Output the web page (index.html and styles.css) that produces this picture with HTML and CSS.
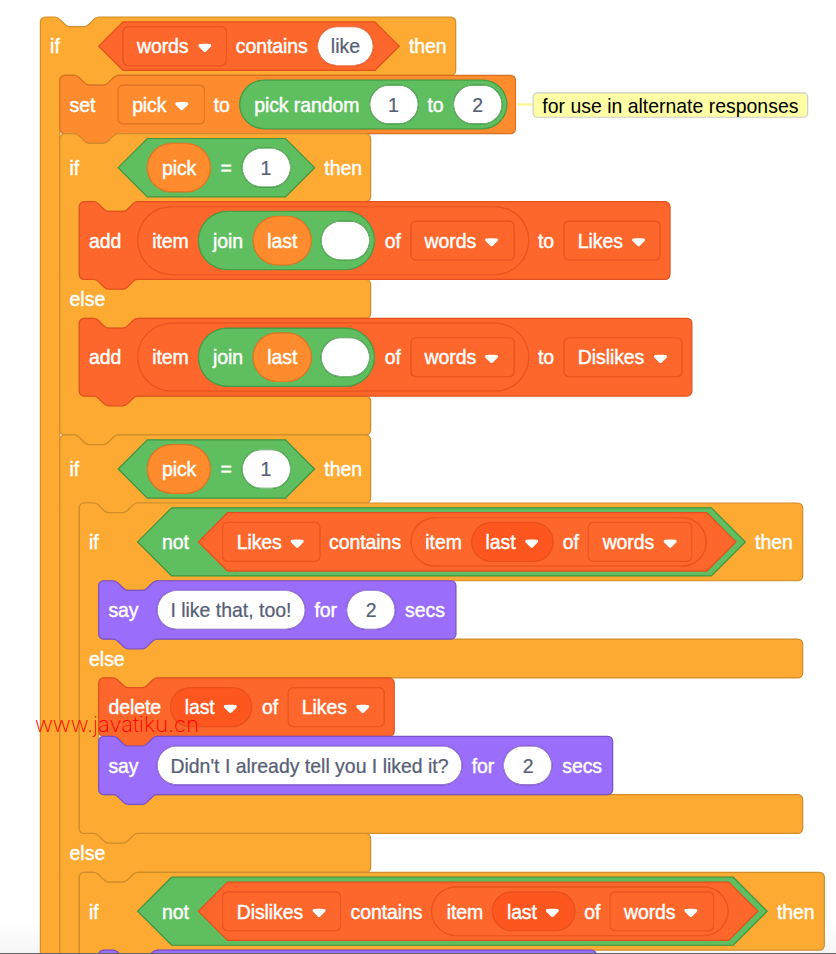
FILE: index.html
```html
<!DOCTYPE html>
<html lang="en">
<head>
    <meta charset="UTF-8">
    <meta name="viewport" content="width=device-width, initial-scale=1.0">
    <title>Likes and dislikes script</title>
    <link rel="stylesheet" href="styles.css">
</head>
<body>

    <svg class="defs">
        <symbol id="arrow" viewBox="0 0 12.71 8.79">
            <path fill="#fff" d="M6.36,7.79a1.43,1.43,0,0,1-1-.42L1.42,3.45a1.44,1.44,0,0,1,0-2c.56-.56,9.31-.56,9.87,0a1.44,1.44,0,0,1,0,2L7.37,7.37A1.43,1.43,0,0,1,6.36,7.79Z"/>
        </symbol>
    </svg>

    <div class="workspace">
        <div class="block control">
            <svg class="shape"><path d="M0,4a4,4 0 0,1 4,-4h8c2,0 3,1 4,2l4,4c1,1 2,2 4,2h12c2,0 3,-1 4,-2l4,-4c1,-1 2,-2 4,-2H337.8a4,4 0 0,1 4,4V44a4,4 0 0,1 -4,4H64c-2,0 -3,1 -4,2l-4,4c-1,1 -2,2 -4,2h-12c-2,0 -3,-1 -4,-2l-4,-4c-1,-1 -2,-2 -4,-2h-8a4,4 0 0,0 -4,4V900H0z"/></svg>
            <div class="row">
                <span class="first">if</span>
                <div class="hex list hex-words">
                    <svg class="shape"><path d="M20,0H227.3l20,20l-20,20H20l-20,-20z"/></svg>
                    <div class="menu">words<svg class="arrow"><use href="#arrow"/></svg></div>
                    <span>contains</span>
                    <div class="input">like</div>
                </div>
                <span>then</span>
            </div>

            <div class="stack">
                <div class="commented">
                    <div class="block data set-block">
                        <svg class="shape"><path d="M0,4a4,4 0 0,1 4,-4h8c2,0 3,1 4,2l4,4c1,1 2,2 4,2h12c2,0 3,-1 4,-2l4,-4c1,-1 2,-2 4,-2H371a4,4 0 0,1 4,4V44a4,4 0 0,1 -4,4H48c-2,0 -3,1 -4,2l-4,4c-1,1 -2,2 -4,2h-12c-2,0 -3,-1 -4,-2l-4,-4c-1,-1 -2,-2 -4,-2h-8a4,4 0 0,1 -4,-4z"/></svg>
                        <div class="row">
                            <span class="first">set</span>
                            <div class="menu">pick<svg class="arrow"><use href="#arrow"/></svg></div>
                            <span>to</span>
                            <div class="pill operator ends-input">
                                <span>pick random</span>
                                <div class="input">1</div>
                                <span>to</span>
                                <div class="input">2</div>
                            </div>
                        </div>
                    </div>
                    <div class="comment-line"></div>
                    <div class="comment">for use in alternate responses</div>
                </div>

                <!-- which list the word goes to -->
                <div class="block control">
                    <svg class="shape"><path d="M0,4a4,4 0 0,1 4,-4h8c2,0 3,1 4,2l4,4c1,1 2,2 4,2h12c2,0 3,-1 4,-2l4,-4c1,-1 2,-2 4,-2H251.8a4,4 0 0,1 4,4V52a4,4 0 0,1 -4,4H64c-2,0 -3,1 -4,2l-4,4c-1,1 -2,2 -4,2h-12c-2,0 -3,-1 -4,-2l-4,-4c-1,-1 -2,-2 -4,-2h-8a4,4 0 0,0 -4,4V116a4,4 0 0,0 4,4H251.8a4,4 0 0,1 4,4V148a4,4 0 0,1 -4,4H64c-2,0 -3,1 -4,2l-4,4c-1,1 -2,2 -4,2h-12c-2,0 -3,-1 -4,-2l-4,-4c-1,-1 -2,-2 -4,-2h-8a4,4 0 0,0 -4,4V212a4,4 0 0,0 4,4H251.8a4,4 0 0,1 4,4V244a4,4 0 0,1 -4,4H48c-2,0 -3,1 -4,2l-4,4c-1,1 -2,2 -4,2h-12c-2,0 -3,-1 -4,-2l-4,-4c-1,-1 -2,-2 -4,-2h-8a4,4 0 0,1 -4,-4z"/></svg>
                    <div class="row medium">
                        <span class="first">if</span>
                        <div class="hex medium operator hex-equals">
                            <svg class="shape"><path d="M24,0H137.7l24,24l-24,24H24l-24,-24z"/></svg>
                            <div class="pill data"><span>pick</span></div>
                            <span>=</span>
                            <div class="input">1</div>
                        </div>
                        <span>then</span>
                    </div>
                    <div class="stack">
                        <div class="block list">
                            <svg class="shape"><path d="M0,4a4,4 0 0,1 4,-4h8c2,0 3,1 4,2l4,4c1,1 2,2 4,2h12c2,0 3,-1 4,-2l4,-4c1,-1 2,-2 4,-2H482.2a4,4 0 0,1 4,4V60a4,4 0 0,1 -4,4H48c-2,0 -3,1 -4,2l-4,4c-1,1 -2,2 -4,2h-12c-2,0 -3,-1 -4,-2l-4,-4c-1,-1 -2,-2 -4,-2h-8a4,4 0 0,1 -4,-4z"/></svg>
                            <div class="row tall">
                                <span class="first">add</span>
                                <div class="pill tall list">
                                    <span>item</span>
                                    <div class="pill medium operator ends-input">
                                        <span>join</span>
                                        <div class="pill data"><span>last</span></div>
                                        <div class="input"></div>
                                    </div>
                                    <span>of</span>
                                    <div class="menu">words<svg class="arrow"><use href="#arrow"/></svg></div>
                                </div>
                                <span>to</span>
                                <div class="menu">Likes<svg class="arrow"><use href="#arrow"/></svg></div>
                            </div>
                        </div>
                    </div>
                    <div class="else">else</div>
                    <div class="stack">
                        <div class="block list">
                            <svg class="shape"><path d="M0,4a4,4 0 0,1 4,-4h8c2,0 3,1 4,2l4,4c1,1 2,2 4,2h12c2,0 3,-1 4,-2l4,-4c1,-1 2,-2 4,-2H500.2a4,4 0 0,1 4,4V60a4,4 0 0,1 -4,4H48c-2,0 -3,1 -4,2l-4,4c-1,1 -2,2 -4,2h-12c-2,0 -3,-1 -4,-2l-4,-4c-1,-1 -2,-2 -4,-2h-8a4,4 0 0,1 -4,-4z"/></svg>
                            <div class="row tall">
                                <span class="first">add</span>
                                <div class="pill tall list">
                                    <span>item</span>
                                    <div class="pill medium operator ends-input">
                                        <span>join</span>
                                        <div class="pill data"><span>last</span></div>
                                        <div class="input"></div>
                                    </div>
                                    <span>of</span>
                                    <div class="menu">words<svg class="arrow"><use href="#arrow"/></svg></div>
                                </div>
                                <span>to</span>
                                <div class="menu">Dislikes<svg class="arrow"><use href="#arrow"/></svg></div>
                            </div>
                        </div>
                    </div>
                    <div class="foot"></div>
                </div>

                <!-- the reply -->
                <div class="block control">
                    <svg class="shape"><path d="M0,4a4,4 0 0,1 4,-4h8c2,0 3,1 4,2l4,4c1,1 2,2 4,2h12c2,0 3,-1 4,-2l4,-4c1,-1 2,-2 4,-2H251.8a4,4 0 0,1 4,4V52a4,4 0 0,1 -4,4H64c-2,0 -3,1 -4,2l-4,4c-1,1 -2,2 -4,2h-12c-2,0 -3,-1 -4,-2l-4,-4c-1,-1 -2,-2 -4,-2h-8a4,4 0 0,0 -4,4V324a4,4 0 0,0 4,4H251.8a4,4 0 0,1 4,4V356a4,4 0 0,1 -4,4H64c-2,0 -3,1 -4,2l-4,4c-1,1 -2,2 -4,2h-12c-2,0 -3,-1 -4,-2l-4,-4c-1,-1 -2,-2 -4,-2h-8a4,4 0 0,0 -4,4V600H0z"/></svg>
                    <div class="row medium">
                        <span class="first">if</span>
                        <div class="hex medium operator hex-equals">
                            <svg class="shape"><path d="M24,0H137.7l24,24l-24,24H24l-24,-24z"/></svg>
                            <div class="pill data"><span>pick</span></div>
                            <span>=</span>
                            <div class="input">1</div>
                        </div>
                        <span>then</span>
                    </div>
                    <div class="stack">
                        <div class="block control">
                            <svg class="shape"><path d="M0,4a4,4 0 0,1 4,-4h8c2,0 3,1 4,2l4,4c1,1 2,2 4,2h12c2,0 3,-1 4,-2l4,-4c1,-1 2,-2 4,-2H591.4a4,4 0 0,1 4,4V60a4,4 0 0,1 -4,4H64c-2,0 -3,1 -4,2l-4,4c-1,1 -2,2 -4,2h-12c-2,0 -3,-1 -4,-2l-4,-4c-1,-1 -2,-2 -4,-2h-8a4,4 0 0,0 -4,4V108a4,4 0 0,0 4,4H591.4a4,4 0 0,1 4,4V140a4,4 0 0,1 -4,4H64c-2,0 -3,1 -4,2l-4,4c-1,1 -2,2 -4,2h-12c-2,0 -3,-1 -4,-2l-4,-4c-1,-1 -2,-2 -4,-2h-8a4,4 0 0,0 -4,4V236a4,4 0 0,0 4,4H591.4a4,4 0 0,1 4,4V268a4,4 0 0,1 -4,4H48c-2,0 -3,1 -4,2l-4,4c-1,1 -2,2 -4,2h-12c-2,0 -3,-1 -4,-2l-4,-4c-1,-1 -2,-2 -4,-2h-8a4,4 0 0,1 -4,-4z"/></svg>
                            <div class="row tall">
                                <span class="first">if</span>
                                <div class="hex tall operator hex-not-likes">
                                    <svg class="shape"><path d="M28,0H472.2l28,28l-28,28H28l-28,-28z"/></svg>
                                    <span>not</span>
                                    <div class="hex medium list hex-likes">
                                        <svg class="shape"><path d="M24,0H418.5l24,24l-24,24H24l-24,-24z"/></svg>
                                        <div class="menu">Likes<svg class="arrow"><use href="#arrow"/></svg></div>
                                        <span>contains</span>
                                        <div class="pill list">
                                            <span>item</span>
                                            <div class="menu round">last<svg class="arrow"><use href="#arrow"/></svg></div>
                                            <span>of</span>
                                            <div class="menu">words<svg class="arrow"><use href="#arrow"/></svg></div>
                                        </div>
                                    </div>
                                </div>
                                <span>then</span>
                            </div>
                            <div class="stack">
                                <div class="block looks">
                                    <svg class="shape"><path d="M0,4a4,4 0 0,1 4,-4h8c2,0 3,1 4,2l4,4c1,1 2,2 4,2h12c2,0 3,-1 4,-2l4,-4c1,-1 2,-2 4,-2H290a4,4 0 0,1 4,4V44a4,4 0 0,1 -4,4H48c-2,0 -3,1 -4,2l-4,4c-1,1 -2,2 -4,2h-12c-2,0 -3,-1 -4,-2l-4,-4c-1,-1 -2,-2 -4,-2h-8a4,4 0 0,1 -4,-4z"/></svg>
                                    <div class="row">
                                        <span class="first">say</span>
                                        <div class="input">I like that, too!</div>
                                        <span>for</span>
                                        <div class="input">2</div>
                                        <span>secs</span>
                                    </div>
                                </div>
                            </div>
                            <div class="else">else</div>
                            <div class="stack">
                                <div class="block list">
                                    <svg class="shape"><path d="M0,4a4,4 0 0,1 4,-4h8c2,0 3,1 4,2l4,4c1,1 2,2 4,2h12c2,0 3,-1 4,-2l4,-4c1,-1 2,-2 4,-2H239.2a4,4 0 0,1 4,4V44a4,4 0 0,1 -4,4H48c-2,0 -3,1 -4,2l-4,4c-1,1 -2,2 -4,2h-12c-2,0 -3,-1 -4,-2l-4,-4c-1,-1 -2,-2 -4,-2h-8a4,4 0 0,1 -4,-4z"/></svg>
                                    <div class="row">
                                        <span class="first">delete</span>
                                        <div class="menu round">last<svg class="arrow"><use href="#arrow"/></svg></div>
                                        <span>of</span>
                                        <div class="menu">Likes<svg class="arrow"><use href="#arrow"/></svg></div>
                                    </div>
                                </div>
                                <div class="block looks">
                                    <svg class="shape"><path d="M0,4a4,4 0 0,1 4,-4h8c2,0 3,1 4,2l4,4c1,1 2,2 4,2h12c2,0 3,-1 4,-2l4,-4c1,-1 2,-2 4,-2H419a4,4 0 0,1 4,4V44a4,4 0 0,1 -4,4H48c-2,0 -3,1 -4,2l-4,4c-1,1 -2,2 -4,2h-12c-2,0 -3,-1 -4,-2l-4,-4c-1,-1 -2,-2 -4,-2h-8a4,4 0 0,1 -4,-4z"/></svg>
                                    <div class="row">
                                        <span class="first">say</span>
                                        <div class="input">Didn't I already tell you I liked it?</div>
                                        <span>for</span>
                                        <div class="input">2</div>
                                        <span>secs</span>
                                    </div>
                                </div>
                            </div>
                            <div class="foot"></div>
                        </div>
                    </div>
                    <div class="else">else</div>
                    <div class="stack">
                        <div class="block control">
                            <svg class="shape"><path d="M0,4a4,4 0 0,1 4,-4h8c2,0 3,1 4,2l4,4c1,1 2,2 4,2h12c2,0 3,-1 4,-2l4,-4c1,-1 2,-2 4,-2H609.2a4,4 0 0,1 4,4V60a4,4 0 0,1 -4,4H64c-2,0 -3,1 -4,2l-4,4c-1,1 -2,2 -4,2h-12c-2,0 -3,-1 -4,-2l-4,-4c-1,-1 -2,-2 -4,-2h-8a4,4 0 0,0 -4,4V200H0z"/></svg>
                            <div class="row tall">
                                <span class="first">if</span>
                                <div class="hex tall operator hex-not-dislikes">
                                    <svg class="shape"><path d="M28,0H490.2l28,28l-28,28H28l-28,-28z"/></svg>
                                    <span>not</span>
                                    <div class="hex medium list hex-dislikes">
                                        <svg class="shape"><path d="M24,0H436.5l24,24l-24,24H24l-24,-24z"/></svg>
                                        <div class="menu">Dislikes<svg class="arrow"><use href="#arrow"/></svg></div>
                                        <span>contains</span>
                                        <div class="pill list">
                                            <span>item</span>
                                            <div class="menu round">last<svg class="arrow"><use href="#arrow"/></svg></div>
                                            <span>of</span>
                                            <div class="menu">words<svg class="arrow"><use href="#arrow"/></svg></div>
                                        </div>
                                    </div>
                                </div>
                                <span>then</span>
                            </div>
                            <div class="stack">
                                <div class="block looks">
                                    <svg class="shape"><path d="M0,4a4,4 0 0,1 4,-4h8c2,0 3,1 4,2l4,4c1,1 2,2 4,2h12c2,0 3,-1 4,-2l4,-4c1,-1 2,-2 4,-2H405.5a4,4 0 0,1 4,4V48H0z"/></svg>
                                    <div class="row"></div>
                                </div>
                            </div>
                        </div>
                    </div>
                </div>
            </div>
        </div>
    </div>

    <div class="watermark">www.javatiku.cn</div>
    <div class="bottom-line"></div>

</body>
</html>
```
FILE: styles.css
```css
body {
    margin: 0;
    width: 836px;
    height: 954px;
    overflow: hidden;
    position: relative;
    background: linear-gradient(#fff 920px, #f5f5f5 954px);
    font-family: "Liberation Sans", Arial, sans-serif;
}
.defs {
    display: none;
}

/* blocks are drawn on a 4px grid and scaled up */
.workspace {
    width: 640px;
    height: 770px;
    margin: 17px 0 0 40px;
    transform: translateX(0.4px) scale(1.215);
    transform-origin: 0 0;
    font-size: 16px;
    line-height: 20px;
    color: #fff;
    white-space: nowrap;
}

.control {
    --fill: #fdaa32;
    --line: #cf8d2b;
}
.data {
    --fill: #fe8c2e;
    --line: #d87021;
}
.list {
    --fill: #fe672c;
    --line: #e2501d;
}
.operator {
    --fill: #5fbf60;
    --line: #3f9440;
}
.looks {
    --fill: #9a6dfb;
    --line: #7852c6;
}

.block,
.hex {
    position: relative;
    isolation: isolate;
}
.shape {
    position: absolute;
    top: 0;
    left: 0;
    width: 100%;
    height: 100%;
    overflow: visible;
    z-index: -1;
    fill: var(--fill);
    stroke: var(--line);
    stroke-width: 1;
}

.row {
    display: flex;
    align-items: center;
    gap: 8px;
    height: 48px;
    padding-left: 8px;
}
.row.medium {
    height: 56px;
}
.row.tall {
    height: 64px;
}
.row span,
.else {
    -webkit-text-stroke: 0.35px #fff;
}
.row span {
    padding-top: 2px;
    letter-spacing: -0.05px;
}
.first {
    min-width: 32px;
}
.stack {
    padding-left: 16px;
}
.else {
    height: 32px;
    padding-left: 8px;
    line-height: 34px;
}
.foot {
    height: 32px;
}

.hex {
    display: flex;
    align-items: center;
    gap: 8px;
    height: 40px;
    padding-left: 20px;
    box-sizing: border-box;
    flex: none;
}
.hex.medium {
    height: 48px;
}
.hex.tall {
    height: 56px;
}
.hex-words {
    width: 247.3px;
}
.hex-equals {
    width: 161.7px;
    padding-left: 24px;
}
.hex-likes {
    width: 442.5px;
}
.hex-not-likes {
    width: 500.2px;
}
.hex-dislikes {
    width: 460.5px;
}
.hex-not-dislikes {
    width: 518.2px;
}

.pill {
    display: flex;
    align-items: center;
    gap: 8px;
    height: 40px;
    padding: 0 12px;
    border-radius: 20px;
    background: var(--fill);
    box-shadow: 0 0 0 0.5px var(--line), inset 0 0 0 0.5px var(--line);
}
.pill.medium {
    height: 48px;
    border-radius: 24px;
}
.pill.tall {
    height: 56px;
    border-radius: 28px;
}
.pill.ends-input {
    padding-right: 4px;
}

.menu {
    display: flex;
    align-items: center;
    gap: 6.7px;
    height: 32px;
    padding: 2px 11.6px 0 11.5px;
    box-sizing: border-box;
    border-radius: 4px;
    box-shadow: 0 0 0 0.5px var(--line), inset 0 0 0 0.5px var(--line);
    letter-spacing: -0.06px;
    -webkit-text-stroke: 0.35px #fff;
}
.menu.round {
    border-radius: 16px;
    background: #fe561f;
}
.arrow {
    width: 12.7px;
    height: 8.8px;
}

.input {
    min-width: 40px;
    height: 32px;
    padding: 0 11px;
    box-sizing: border-box;
    border-radius: 16px;
    background: #fff;
    box-shadow: 0 0 0 0.5px var(--line), inset 0 0 0 0.5px var(--line);
    color: #575e75;
    line-height: 34px;
    text-align: center;
    -webkit-text-stroke: 0.2px #575e75;
}

.commented {
    display: flex;
    align-items: center;
}
.set-block {
    width: 375px;
}
.comment-line {
    width: 12px;
    height: 2px;
    margin: 0 0 0 2px;
    background: #fff68f;
}
.comment {
    width: 225px;
    height: 19px;
    border: 1px solid #ccc;
    border-radius: 4px;
    background: #ffffa5;
    color: #000;
    line-height: 21px;
    text-align: center;
}

.watermark {
    position: absolute;
    top: 710px;
    left: 35px;
    color: #f00;
    font-family: Inter, sans-serif;
    font-size: 22px;
    font-weight: 200;
    line-height: 28px;
}
.bottom-line {
    position: absolute;
    left: 0;
    bottom: 0;
    width: 100%;
    height: 1px;
    background: #666;
}
```
